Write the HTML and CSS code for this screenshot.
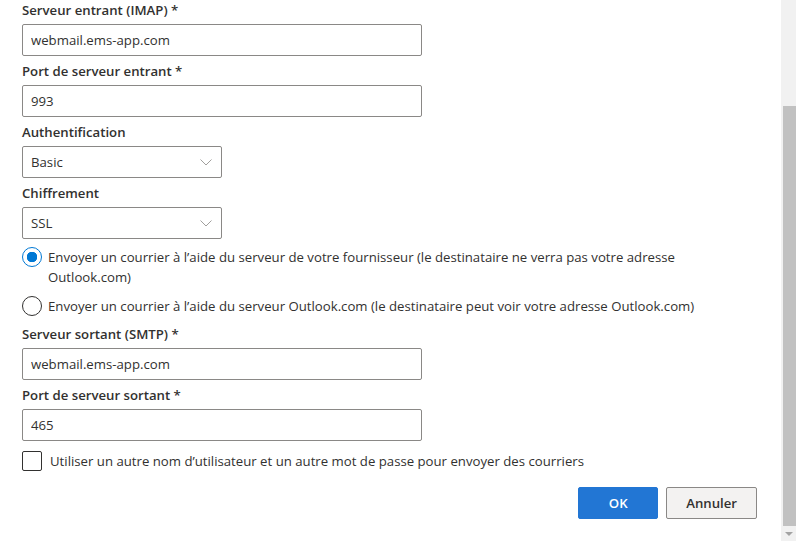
FILE: index.html
```html
<!DOCTYPE html>
<html lang="fr">
  <head>
    <meta charset="UTF-8" />
    <meta name="viewport" content="width=device-width, initial-scale=1.0" />
    <title>Compte POP / IMAP</title>
    <link rel="stylesheet" href="styles.css">
  </head>
  <body>
    <div class="window">
      <main class="dialog">
        <form class="account-form" action="">
          <div class="field">
            <label class="field-label" for="imapServer">Serveur entrant (IMAP) *</label>
            <input class="text-input" type="text" id="imapServer" value="webmail.ems-app.com" />
          </div>
          <div class="field">
            <label class="field-label" for="imapPort">Port de serveur entrant *</label>
            <input class="text-input" type="text" id="imapPort" value="993" />
          </div>
          <div class="field">
            <span class="field-label">Authentification</span>
            <div class="dropdown">
              <span>Basic</span>
              <svg class="chevron" width="12" height="12" viewBox="0 0 12 12">
                <polyline points="0.5,3.5 6,9 11.5,3.5" />
              </svg>
            </div>
          </div>
          <div class="field">
            <span class="field-label">Chiffrement</span>
            <div class="dropdown">
              <span>SSL</span>
              <svg class="chevron" width="12" height="12" viewBox="0 0 12 12">
                <polyline points="0.5,3.5 6,9 11.5,3.5" />
              </svg>
            </div>
          </div>
          <div class="choice-group">
            <label class="choice">
              <span class="radio radio-checked"></span>
              <span class="choice-text">Envoyer un courrier à l’aide du serveur de votre fournisseur (le destinataire ne verra pas votre adresse Outlook.com)</span>
            </label>
            <label class="choice">
              <span class="radio"></span>
              <span class="choice-text">Envoyer un courrier à l’aide du serveur Outlook.com (le destinataire peut voir votre adresse Outlook.com)</span>
            </label>
          </div>
          <div class="field">
            <label class="field-label" for="smtpServer">Serveur sortant (SMTP) *</label>
            <input class="text-input" type="text" id="smtpServer" value="webmail.ems-app.com" />
          </div>
          <div class="field">
            <label class="field-label" for="smtpPort">Port de serveur sortant *</label>
            <input class="text-input" type="text" id="smtpPort" value="465" />
          </div>
          <label class="check">
            <span class="checkbox"></span>
            <span>Utiliser un autre nom d’utilisateur et un autre mot de passe pour envoyer des courriers</span>
          </label>
          <div class="actions">
            <button type="button" class="btn btn-primary">OK</button>
            <button type="button" class="btn">Annuler</button>
          </div>
        </form>
      </main>
      <div class="scrollbar">
        <div class="scroll-thumb"></div>
        <div class="scroll-arrow"></div>
      </div>
    </div>
  </body>
</html>
```

FILE: styles.css
```css
body {
  margin: 0;
  background-color: #ffffff;
  color: #323130;
  font-family: "Open Sans", "Noto Sans", sans-serif;
  font-size: 13.2px;
}
.window {
  display: flex;
  height: 541px;
  overflow: hidden;
}
.dialog {
  flex: 1;
  padding: 0 24px 0 22px;
}
.account-form {
  margin-top: -5px;
}
.field-label {
  display: block;
  padding: 5px 0 4px;
  line-height: 20px;
  font-weight: 600;
}
.text-input {
  display: block;
  box-sizing: border-box;
  width: 400px;
  height: 32px;
  margin: 0;
  padding: 0 8px;
  border: 1px solid #8a8886;
  border-radius: 2px;
  outline: none;
  color: #323130;
  font-family: inherit;
  font-size: 13.2px;
}
.dropdown {
  display: flex;
  align-items: center;
  justify-content: space-between;
  box-sizing: border-box;
  width: 200px;
  height: 32px;
  padding: 0 8px;
  border: 1px solid #8a8886;
  border-radius: 2px;
}
.chevron {
  fill: none;
  stroke: #a19f9d;
  stroke-width: 1;
  margin-right: 1px;
}
.choice-group {
  display: flex;
  flex-direction: column;
  gap: 9px;
  padding: 8px 0 3px;
}
.choice {
  display: flex;
  align-items: flex-start;
  gap: 6px;
  line-height: 20px;
}
.choice-text {
  max-width: 700px;
}
.radio {
  box-sizing: border-box;
  flex: none;
  width: 20px;
  height: 20px;
  border: 1px solid #323130;
  border-radius: 50%;
}
.radio-checked {
  border-color: #0078d4;
  background: radial-gradient(circle, #0078d4 0 5px, #ffffff 5.5px);
}
.check {
  display: flex;
  align-items: center;
  gap: 8px;
  margin-top: 10px;
  line-height: 20px;
}
.checkbox {
  box-sizing: border-box;
  flex: none;
  width: 20px;
  height: 20px;
  border: 1px solid #323130;
  border-radius: 2px;
}
.actions {
  display: flex;
  justify-content: flex-end;
  gap: 8px;
  margin-top: 16px;
}
.btn {
  min-width: 80px;
  height: 32px;
  padding: 0 19px;
  border: 1px solid #8a8886;
  border-radius: 2px;
  background-color: #f3f2f1;
  color: #323130;
  font-family: inherit;
  font-size: 13.2px;
  font-weight: 600;
}
.btn-primary {
  border-color: #2276d4;
  background-color: #2276d4;
  color: #ffffff;
}
.scrollbar {
  display: flex;
  flex-direction: column;
  width: 15px;
  background-color: #f1f1f1;
}
.scroll-thumb {
  height: 420px;
  margin: 106px 0 0 2px;
  background-color: #c1c1c1;
}
.scroll-arrow {
  flex: 1;
  display: flex;
  align-items: center;
  justify-content: center;
}
.scroll-arrow::before {
  content: "";
  border-top: 4px solid #a3a3a3;
  border-left: 4px solid transparent;
  border-right: 4px solid transparent;
}
```
